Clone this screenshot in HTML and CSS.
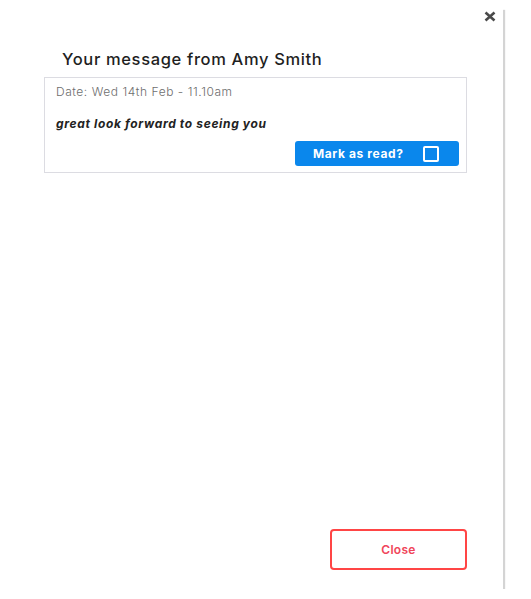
FILE: index.html
```html
<!DOCTYPE html>
<html>
<head>
<meta charset="utf-8">
<link rel="stylesheet" href="styles.css">
</head>
<body>
<div class="modal">
  <button class="close-x" aria-label="close">
    <svg width="12" height="11" viewBox="0 0 12 11"><path d="M1.5 1.5 L10.5 9.5 M10.5 1.5 L1.5 9.5" stroke="#4a4a4a" stroke-width="2.6" stroke-linecap="butt"/></svg>
  </button>
  <h1 class="title">Your message from Amy Smith</h1>
  <div class="card">
    <div class="date">Date: Wed 14th Feb - 11.10am</div>
    <div class="msg">great look forward to seeing you</div>
    <div class="actions">
      <button class="mark">Mark as read? <span class="box"></span></button>
    </div>
  </div>
  <div class="spacer"></div>
  <div class="footer">
    <button class="close-btn">Close</button>
  </div>
</div>
</body>
</html>
```
FILE: styles.css
```css
html, body {
  margin: 0;
  padding: 0;
  background: #fff;
  font-family: "Inter", "Open Sans", sans-serif;
}
.modal {
  position: relative;
  box-sizing: border-box;
  width: 475px;
  height: 582px;
  margin: 7px 0 0 28px;
  background: #fff;
  box-shadow: 2px 3px 1px rgba(0, 0, 0, 0.17);
  display: flex;
  flex-direction: column;
  padding: 0 36px 19px 16px;
}
.close-x {
  position: absolute;
  top: 4px;
  right: 7px;
  padding: 0;
  border: 0;
  background: none;
  width: 12px;
  height: 11px;
  display: block;
}
.close-x svg { display: block; }
.title {
  margin: 42px 0 0 18px;
  font-size: 16.5px;
  line-height: 20px;
  font-weight: 500;
  color: #1f1f1f;
  letter-spacing: 0.65px;
}
.card {
  margin-top: 8px;
  border: 1px solid #dcdce2;
  padding: 6px 7px 6px 11px;
}
.date {
  font-size: 12px;
  line-height: 15px;
  color: #6e6e6e;
  font-weight: 300;
  letter-spacing: 0.55px;
}
.msg {
  margin-top: 17px;
  font-size: 12px;
  line-height: 15px;
  font-weight: 700;
  font-style: italic;
  color: #222;
  letter-spacing: 0.65px;
}
.actions {
  display: flex;
  justify-content: flex-end;
  margin-top: 10px;
}
.mark {
  display: flex;
  align-items: center;
  justify-content: space-between;
  box-sizing: border-box;
  width: 164px;
  height: 25px;
  padding: 0 20px 0 18px;
  border: 0;
  border-radius: 3px;
  background: #0a87ec;
  color: #fff;
  font-family: inherit;
  font-size: 12px;
  font-weight: 700;
  letter-spacing: 0.6px;
}
.box {
  width: 12px;
  height: 12px;
  border: 2px solid #fff;
  border-radius: 2px;
}
.spacer { flex: 1; }
.footer {
  display: flex;
  justify-content: flex-end;
}
.close-btn {
  box-sizing: border-box;
  width: 137px;
  height: 41px;
  border: 2px solid #ff4545;
  border-radius: 4px;
  background: #fff;
  color: #f0455a;
  font-family: inherit;
  font-size: 12px;
  font-weight: 600;
  letter-spacing: 0.3px;
}
```
